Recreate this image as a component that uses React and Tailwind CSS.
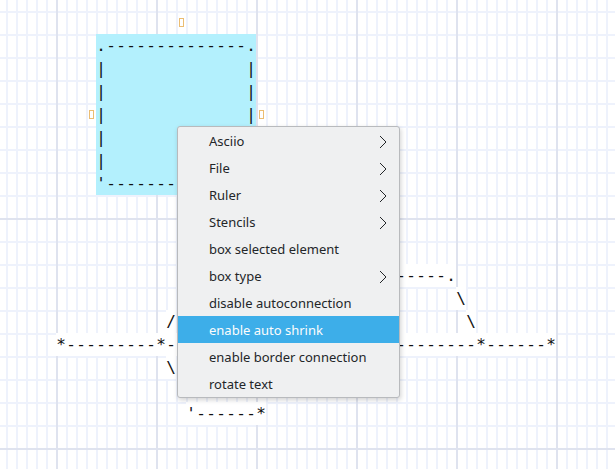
import React from "react";

function Row({ text }) {
  return (
    <div className="flex h-[23px] leading-[23px]">
      {text.split("").map((c, i) => (
        <span key={i} className="w-[10px] shrink-0 text-center">
          {c === " " ? "\u00a0" : c}
        </span>
      ))}
    </div>
  );
}

function Chevron() {
  return (
    <svg width="8" height="14" viewBox="0 0 8 14" className="shrink-0">
      <polyline points="1,1 7,7 1,13" fill="none" stroke="#232629" strokeWidth="1" />
    </svg>
  );
}

const items = [
  { label: "Asciio", sub: true },
  { label: "File", sub: true },
  { label: "Ruler", sub: true },
  { label: "Stencils", sub: true },
  { label: "box selected element" },
  { label: "box type", sub: true },
  { label: "disable autoconnection" },
  { label: "enable auto shrink", active: true },
  { label: "enable border connection" },
  { label: "rotate text" },
];

export default function App() {
  return (
    <div className="relative w-[615px] h-[469px] overflow-hidden bg-white bg-[linear-gradient(to_right,#dfe3ef_2px,transparent_2px),linear-gradient(to_bottom,#dfe3ef_2px,transparent_2px),linear-gradient(to_right,#eef2fc_2px,transparent_2px),linear-gradient(to_bottom,#eef2fc_2px,transparent_2px)] bg-[size:100px_230px,100px_230px,10px_23px,10px_23px] bg-[position:56px_218px,56px_218px,6px_11px,6px_11px] text-[16px] text-[#111] [font-family:'DejaVu_Sans_Mono',monospace]">
      {/* selected box */}
      <div className="absolute left-[96px] top-[34px] w-[160px] bg-[#b3f0fd]">
        <Row text=".--------------." />
        <Row text="|              |" />
        <Row text="|              |" />
        <Row text="|              |" />
        <Row text="|              |" />
        <Row text="|              |" />
        <Row text="'--------------'" />
      </div>
      {/* handles */}
      <div className="absolute left-[179px] top-[18px] w-[5px] h-[9px] border border-[#ebbd72]" />
      <div className="absolute left-[89px] top-[110px] w-[5px] h-[9px] border border-[#ebbd72]" />
      <div className="absolute left-[259px] top-[110px] w-[5px] h-[9px] border border-[#ebbd72]" />

      {/* left connector */}
      <div className="absolute left-[56px] top-[333px] bg-white">
        <Row text="*---------*--" />
      </div>
      <div className="absolute left-[166px] top-[310px] bg-white">
        <Row text="/" />
      </div>
      <div className="absolute left-[166px] top-[356px] bg-white">
        <Row text="\" />
      </div>
      <div className="absolute left-[186px] top-[402px] bg-white">
        <Row text="'------*" />
      </div>

      {/* right connector */}
      <div className="absolute left-[366px] top-[264px] bg-white">
        <Row text="--------." />
      </div>
      <div className="absolute left-[456px] top-[287px] bg-white">
        <Row text="\" />
      </div>
      <div className="absolute left-[466px] top-[310px] bg-white">
        <Row text="\" />
      </div>
      <div className="absolute left-[366px] top-[333px] bg-white">
        <Row text="-----------*------*" />
      </div>

      {/* context menu */}
      <div className="absolute left-[177px] top-[126px] w-[223px] bg-[#eff0f1] border border-[#b8babd] rounded-[3px] shadow-[1px_2px_5px_rgba(0,0,0,0.18)] [font-family:'Noto_Sans',sans-serif] text-[13px] text-[#232629]">
        {items.map((it) => (
          <div
            key={it.label}
            className={
              it.active
                ? "flex items-center justify-between h-[27px] pt-[2px] pl-[31px] pr-[12px] bg-[#3daee9] text-[#fcfcfc]"
                : "flex items-center justify-between h-[27px] pt-[2px] pl-[31px] pr-[12px]"
            }
          >
            <span>{it.label}</span>
            {it.sub ? <Chevron /> : null}
          </div>
        ))}
      </div>
    </div>
  );
}
